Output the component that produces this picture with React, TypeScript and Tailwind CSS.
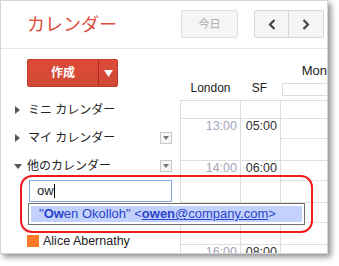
import React from "react";

const hours = [
  { local: "13:00", sf: "05:00" },
  { local: "14:00", sf: "06:00" },
  { local: "15:00", sf: "07:00" },
  { local: "16:00", sf: "08:00" },
];

const RightTri = () => (
  <svg width="5" height="8" viewBox="0 0 5 8" className="shrink-0">
    <path d="M0 0 L5 4 L0 8 Z" fill="#555" />
  </svg>
);

const DownTri = () => (
  <svg width="8" height="5" viewBox="0 0 8 5" className="shrink-0">
    <path d="M0 0 L8 0 L4 5 Z" fill="#555" />
  </svg>
);

const MenuBox = () => (
  <div className="w-[12px] h-[12px] border border-[#c8c8c8] bg-[#f6f6f6] flex items-center justify-center mr-[8px]">
    <svg width="6" height="4" viewBox="0 0 6 4">
      <path d="M0 0 L6 0 L3 4 Z" fill="#777" />
    </svg>
  </div>
);

const App = () => {
  return (
    <div className="w-[339px] h-[266px] bg-white font-['Liberation_Sans','Noto_Sans_CJK_JP',sans-serif]">
      <div className="relative w-[328px] h-[254px] bg-white border border-[#d4d4d4] shadow-[3px_3px_6px_rgba(0,0,0,0.45)] overflow-hidden flex flex-col">
        {/* header */}
        <div className="h-[48px] shrink-0 border-b border-[#e5e5e5] flex items-start">
          <div className="w-[180px] h-full pl-[26px] flex items-center">
            <h1 className="text-[18px] leading-none text-[#dd4b39]">カレンダー</h1>
          </div>
          <button className="mt-[9px] w-[57px] h-[28px] rounded-[2px] border border-[#dcdcdc] bg-[#f5f5f5] text-[11px] text-[#aaa]">
            今日
          </button>
          <div className="mt-[9px] ml-[16px] flex h-[28px] rounded-[2px] border border-[#d6d6d6] bg-[#f5f5f5]">
            <div className="w-[34px] flex items-center justify-center border-r border-[#d6d6d6]">
              <svg width="8" height="11" viewBox="0 0 8 11">
                <path d="M6.5 1 L2 5.5 L6.5 10" fill="none" stroke="#444" strokeWidth="2.2" />
              </svg>
            </div>
            <div className="w-[34px] flex items-center justify-center">
              <svg width="8" height="11" viewBox="0 0 8 11">
                <path d="M1.5 1 L6 5.5 L1.5 10" fill="none" stroke="#444" strokeWidth="2.2" />
              </svg>
            </div>
          </div>
        </div>

        {/* body */}
        <div className="flex flex-1 min-h-0">
          {/* sidebar */}
          <div className="w-[179px] shrink-0 pt-[10px] flex flex-col">
            <div className="ml-[26px] w-[91px] h-[28px] flex rounded-[2px] border border-[#c53727] bg-gradient-to-b from-[#dd4b39] to-[#d14836] text-white">
              <div className="w-[71px] flex items-center justify-center text-[12px] font-bold border-r border-[#b0281a]">
                作成
              </div>
              <div className="flex-1 flex items-center justify-center">
                <svg width="9" height="7" viewBox="0 0 9 7">
                  <path d="M0 0 L9 0 L4.5 7 Z" fill="#fff" />
                </svg>
              </div>
            </div>

            <div className="mt-[9px] flex flex-col text-[12px] text-[#222]">
              <div className="h-[28px] flex items-center pl-[14px]">
                <RightTri />
                <span className="ml-[8px]">ミニ カレンダー</span>
              </div>
              <div className="h-[28px] flex items-center pl-[14px]">
                <RightTri />
                <span className="ml-[8px]">マイ カレンダー</span>
                <div className="flex-1" />
                <MenuBox />
              </div>
              <div className="h-[28px] flex items-center pl-[13px]">
                <DownTri />
                <span className="ml-[5px]">他のカレンダー</span>
                <div className="flex-1" />
                <MenuBox />
              </div>
            </div>

            <div className="ml-[28px] w-[143px] h-[22px] border border-[#86a9de] bg-white flex items-center pl-[7px] text-[13px] text-[#222]">
              ow<span className="w-px h-[14px] bg-black" />
            </div>

            <div className="mt-[32px] ml-[26px] flex items-center h-[14px] text-[12.5px] text-[#222]">
              <div className="w-[12px] h-[12px] bg-[#fb7a26]" />
              <span className="ml-[4px]">Alice Abernathy</span>
            </div>
          </div>

          {/* grid area */}
          <div className="flex-1 flex flex-col min-w-0">
            <div className="h-[51px] shrink-0 flex flex-col">
              <div className="h-[29px] flex items-end">
                <div className="w-[101px]" />
                <div className="pl-[25px] text-[13px] leading-[15px] text-[#222] whitespace-nowrap">Mon</div>
              </div>
              <div className="flex-1 flex items-start text-[12px] text-[#222]">
                <div className="w-[61px] text-center pt-[1px]">London</div>
                <div className="w-[40px] text-center pr-[3px] pt-[1px]">SF</div>
                <div className="flex-1 ml-[1px] mt-[5px] h-[13px] border border-[#dcdcdc] border-r-0" />
              </div>
            </div>

            <div className="border-t border-l border-[#dddddd] flex flex-col">
              <div className="h-[18px] flex border-b border-[#dddddd]">
                <div className="w-[60px] border-r border-[#dddddd]" />
                <div className="w-[40px] border-r border-[#dddddd]" />
                <div className="flex-1" />
              </div>
              {hours.map((h) => (
                <div key={h.local} className="h-[42px] shrink-0 flex border-b border-[#dddddd]">
                  <div className="w-[60px] border-r border-[#dddddd] text-right pr-[3px] text-[12.5px] leading-[15px] text-[#a3a5b8]">
                    {h.local}
                  </div>
                  <div className="w-[40px] border-r border-[#dddddd] text-right pr-[3px] text-[12.5px] leading-[15px] text-[#333]">
                    {h.sf}
                  </div>
                  <div className="flex-1">
                    <div className="h-[20px] border-b border-dotted border-[#cccccc]" />
                  </div>
                </div>
              ))}
            </div>
          </div>
        </div>

        {/* autocomplete suggestion */}
        <div className="absolute left-[27px] top-[202px] w-[277px] h-[22px] border border-[#707070] bg-white p-[2px]">
          <div className="h-full bg-[#c3d2fd] flex items-center pl-[8px] text-[13px] text-[#2a43c8] whitespace-nowrap">
            "<b>Ow</b>en Okolloh" &lt;
            <span className="underline">
              <b>owen</b>@company.com
            </span>
            &gt;
          </div>
        </div>

        {/* annotation */}
        <div className="absolute left-[19px] top-[174px] w-[293px] h-[58px] border-2 border-[#ee1c1c] rounded-[12px]" />
      </div>
    </div>
  );
};

export default App;
